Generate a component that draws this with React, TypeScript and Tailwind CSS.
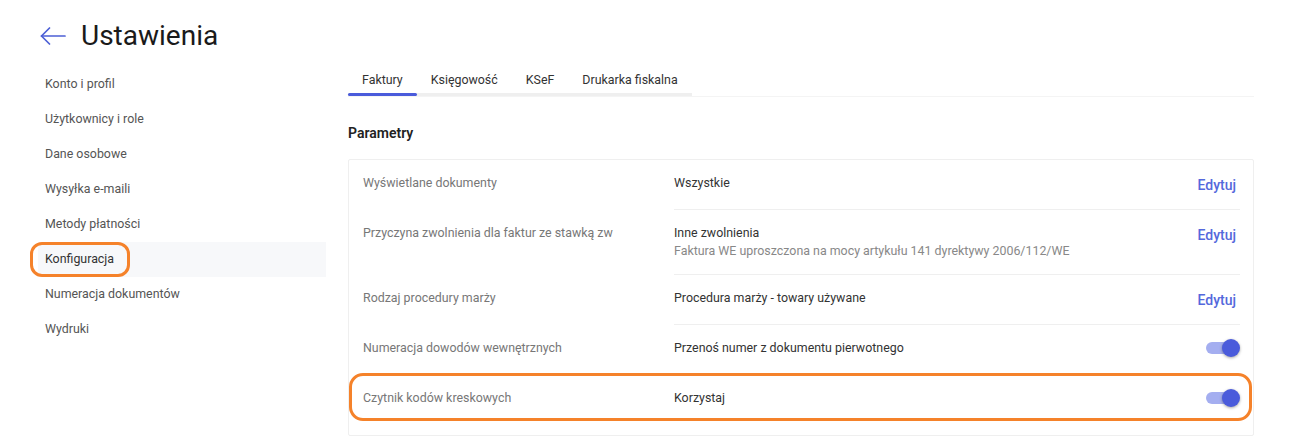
import { useState } from "react";

const menu = [
  "Konto i profil",
  "Użytkownicy i role",
  "Dane osobowe",
  "Wysyłka e-maili",
  "Metody płatności",
  "Konfiguracja",
  "Numeracja dokumentów",
  "Wydruki",
];

const tabs = ["Faktury", "Księgowość", "KSeF", "Drukarka fiskalna"];

type Row = {
  label: string;
  value: string;
  sub?: string;
  action: "edit" | "toggle";
  marked?: boolean;
};

const rows: Row[] = [
  { label: "Wyświetlane dokumenty", value: "Wszystkie", action: "edit" },
  {
    label: "Przyczyna zwolnienia dla faktur ze stawką zw",
    value: "Inne zwolnienia",
    sub: "Faktura WE uproszczona na mocy artykułu 141 dyrektywy 2006/112/WE",
    action: "edit",
  },
  { label: "Rodzaj procedury marży", value: "Procedura marży - towary używane", action: "edit" },
  { label: "Numeracja dowodów wewnętrznych", value: "Przenoś numer z dokumentu pierwotnego", action: "toggle" },
  { label: "Czytnik kodów kreskowych", value: "Korzystaj", action: "toggle", marked: true },
];

function Toggle() {
  return (
    <div className="relative h-[18px] w-[34px] shrink-0">
      <div className="absolute left-0 top-[3px] h-[12px] w-[30px] rounded-full bg-[#a4aef0]" />
      <div className="absolute right-0 top-0 h-[18px] w-[18px] rounded-full bg-[#4a5bdb] shadow-[0_1px_3px_rgba(0,0,0,0.35)]" />
    </div>
  );
}

function App() {
  const [active] = useState(5);

  return (
    <div className="min-h-screen bg-white font-['Roboto',sans-serif] text-[12.4px]">
      {/* Header */}
      <div className="flex items-center pl-[40px] pt-[18px] h-[54px]">
        <svg width="26" height="18" viewBox="0 0 26 18" fill="none" stroke="#4c5fd5" strokeWidth="1.7" strokeLinecap="round" strokeLinejoin="round">
          <path d="M25 9H1.5" />
          <path d="M9.5 1L1.5 9L9.5 17" />
        </svg>
        <h1 className="ml-[15px] text-[28px] leading-[36px] text-[#1a1a1a]">Ustawienia</h1>
      </div>

      <div className="flex pl-[38px] pr-[61px] pt-[12px]">
        {/* Sidebar */}
        <nav className="w-[288px] shrink-0 pt-[1px]">
          {menu.map((item, i) => (
            <div
              key={item}
              className={`relative flex h-[35px] items-center pl-[7px] ${
                i === active ? "bg-[#f7f8fa] text-[#333]" : "text-[#555]"
              }`}
            >
              {item}
              {i === active && (
                <div className="absolute left-[-8px] top-[0px] h-[35px] w-[100px] rounded-[12px] border-[3px] border-[#f5822a]" />
              )}
            </div>
          ))}
        </nav>

        {/* Content */}
        <div className="ml-[22px] flex-1 pt-[5px]">
          <div className="border-b border-[#f4f4f4]">
            <div className="flex w-fit border-b-[3px] border-[#efefef]">
              {tabs.map((t, i) => (
                <div key={t} className="relative px-[14px] pb-[4px] leading-[18px] text-[#333]">
                  {t}
                  {i === 0 && (
                    <div className="absolute left-0 right-0 bottom-[-3px] h-[3px] rounded-full bg-[#4a5bdb]" />
                  )}
                </div>
              ))}
            </div>
          </div>

          <h2 className="mt-[26px] text-[14px] font-semibold leading-[20px] text-[#222]">Parametry</h2>

          <div className="mt-[16px] rounded-[2px] border border-[#efefef] pl-[14px] pr-[13px] pb-[10px]">
            {rows.map((r, i) => (
              <div key={r.label} className="relative flex">
                <div className="w-[311px] shrink-0 pt-[14px] leading-[18px] text-[#777]">{r.label}</div>
                <div
                  className={`flex min-h-[50px] flex-1 items-start justify-between pt-[14px] pb-[14px] ${
                    i < rows.length - 1 ? "border-b border-[#efefef]" : ""
                  }`}
                >
                  <div className="leading-[18px]">
                    <div className="text-[#333]">{r.value}</div>
                    {r.sub && <div className="text-[#888]">{r.sub}</div>}
                  </div>
                  {r.action === "edit" ? (
                    <span className="pr-[4px] pt-[2px] text-[14px] font-medium leading-[18px] text-[#5468dc]">Edytuj</span>
                  ) : (
                    <Toggle />
                  )}
                </div>
                {r.marked && (
                  <div className="absolute left-[-14px] right-[-12px] top-[-2px] bottom-[4px] rounded-[14px] border-[3px] border-[#f5822a]" />
                )}
              </div>
            ))}
          </div>
        </div>
      </div>
    </div>
  );
}

export default App;
